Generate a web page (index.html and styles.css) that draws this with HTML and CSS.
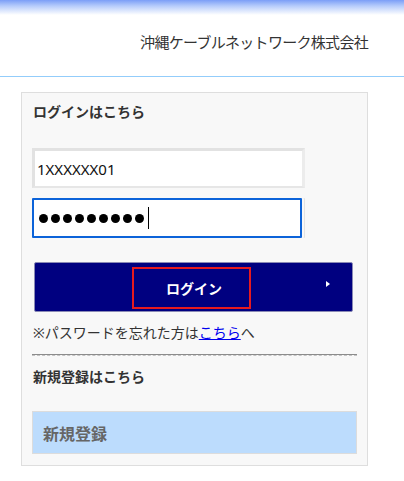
FILE: index.html
```html
<!DOCTYPE html>
<html lang="ja">
<head>
<meta charset="utf-8">
<title>ログイン</title>
<link rel="stylesheet" href="styles.css">
</head>
<body>
<header class="site-header">
  <div class="company">沖縄ケーブルネットワーク株式会社</div>
</header>
<main class="card">
  <h2 class="section-title">ログインはこちら</h2>
  <div class="field field-id">1XXXXXX01</div>
  <div class="field field-pass">
    <span class="dot"></span><span class="dot"></span><span class="dot"></span><span class="dot"></span><span class="dot"></span><span class="dot"></span><span class="dot"></span><span class="dot"></span><span class="dot"></span><span class="caret"></span>
  </div>
  <div class="login-btn">
    <span class="login-label">ログイン</span>
    <span class="arrow"></span>
  </div>
  <p class="forgot">※パスワードを忘れた方は<a href="#">こちら</a>へ</p>
  <hr class="divider">
  <h2 class="section-title second">新規登録はこちら</h2>
  <div class="register">新規登録</div>
</main>
</body>
</html>
```

FILE: styles.css
```css
* { box-sizing: border-box; }
html, body { margin: 0; padding: 0; background: #fff; }
body {
  width: 404px;
  font-family: "Noto Sans", "Noto Sans CJK JP", sans-serif;
  color: #333;
}
.site-header {
  height: 77px;
  border-bottom: 1px solid #93cdfb;
  background: linear-gradient(to bottom, #7b9ef7 0px, #b6ccfb 6px, #ffffff 15px, #ffffff 100%);
  display: flex;
  justify-content: flex-end;
  align-items: center;
  padding: 8px 36px 0 0;
}
.company {
  font-size: 15px;
  line-height: 20px;
  color: #333;
  letter-spacing: -0.7px;
}
.card {
  display: flex;
  flex-direction: column;
  align-items: flex-start;
  margin: 15px 0 0 21px;
  width: 347px;
  border: 1px solid #dedede;
  background: #f8f8f8;
  padding: 9px 10px 11px 10px;
}
.section-title {
  margin: 0 0 0 1px;
  font-size: 14px;
  line-height: 20px;
  font-weight: bold;
  color: #333;
}
.field {
  width: 273px;
  height: 40px;
  background: #fff;
  display: flex;
  align-items: center;
}
.field-id {
  margin-top: 26px;
  border-top: 3px solid #e2e2e2;
  border-left: 3px solid #e2e2e2;
  border-right: 3px solid #ececec;
  border-bottom: 2px solid #e6e6e6;
  padding-left: 2px;
  font-size: 15px;
  color: #111;
}
.field-pass {
  margin-top: 10px;
  width: 270px;
  border: 2px solid #0c63d9;
  border-radius: 1px;
  padding-left: 5px;
  gap: 3px;
  box-shadow: 2px 0 0 0 #f8f8f8, 3px 0 0 0 #e2e2e2;
}
.dot {
  width: 9px;
  height: 9px;
  border-radius: 50%;
  background: #000;
  flex: none;
}
.caret {
  width: 1px;
  height: 22px;
  background: #000;
  margin-left: 1px;
}
.login-btn {
  margin: 24px 0 0 2px;
  width: 319px;
  height: 50px;
  background: #000080;
  border: 1px solid #8a8ab5;
  border-radius: 2px;
  display: grid;
  grid-template-columns: 97px 119px 1fr;
  padding-top: 4px;
}
.login-label {
  grid-column: 2;
  height: 42px;
  border: 2px solid #e61a1f;
  color: #fff;
  font-weight: bold;
  font-size: 14px;
  display: flex;
  align-items: center;
  justify-content: center;
  padding-left: 5px;
}
.arrow {
  grid-column: 3;
  justify-self: end;
  margin: 14px 22px 0 0;
  width: 0;
  height: 0;
  border-top: 3.5px solid transparent;
  border-bottom: 3.5px solid transparent;
  border-left: 4px solid #fff;
}
.forgot {
  margin: 11px 0 0 1px;
  font-size: 14px;
  line-height: 20px;
  color: #333;
}
.forgot a { color: #0000ee; text-decoration: underline; }
.divider {
  margin: 11px 0 0 0;
  width: 325px;
  height: 0;
  border: 0;
  border-top: 1px solid #8c8c8c;
  border-bottom: 1px dashed #c4c4c4;
}
.second { margin-top: 11px; }
.register {
  margin-top: 24px;
  width: 325px;
  height: 43px;
  background: #bcdcfd;
  border: 1px solid #dcdcdc;
  display: flex;
  align-items: center;
  padding-left: 10px;
  font-size: 16px;
  font-weight: bold;
  color: #666;
}
```
